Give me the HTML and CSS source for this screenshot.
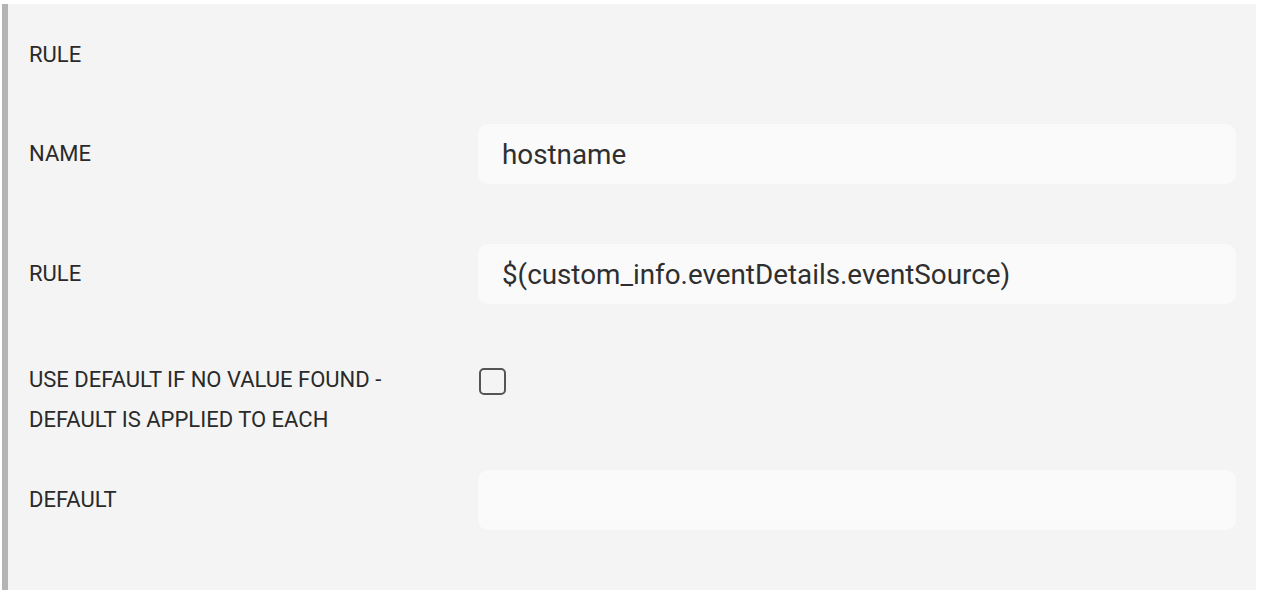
FILE: index.html
```html
<!DOCTYPE html>
<html lang="en">
<head>
    <meta charset="UTF-8">
    <title>Rule</title>
    <link rel="stylesheet" href="styles.css">
</head>
<body>

<div class="rule-panel">
    <div class="panel-title">Rule</div>

    <div class="field-row row-name">
        <label class="field-label" for="rule-name">Name</label>
        <input type="text" id="rule-name" class="field-input" value="hostname">
    </div>

    <div class="field-row row-rule">
        <label class="field-label" for="rule-expr">Rule</label>
        <input type="text" id="rule-expr" class="field-input" value="$(custom_info.eventDetails.eventSource)">
    </div>

    <div class="field-row row-check">
        <label class="field-label multi" for="use-default">Use default if no value found - default is applied to each</label>
        <span class="check-box" id="use-default"></span>
    </div>

    <div class="field-row row-default">
        <label class="field-label" for="rule-default">Default</label>
        <input type="text" id="rule-default" class="field-input" value="">
    </div>
</div>

</body>
</html>
```

FILE: styles.css
```css
/* Painel de regra */
body {
    margin: 0;
    background-color: #ffffff;
    font-family: Roboto, "Liberation Sans", Arial, sans-serif;
    color: #2f2f2f;
}

.rule-panel {
    margin: 4px 0 0 2px;
    width: 1254px;
    min-height: 586px;
    box-sizing: border-box;
    background-color: #f4f4f4;
    border-left: 6px solid #b4b4b4;
    padding: 31px 20px 0 21px;
}

.panel-title,
.field-label {
    font-size: 22px;
    font-weight: 400;
    text-transform: uppercase;
    line-height: 40px;
    color: #2a2a2a;
}

.field-row {
    display: grid;
    grid-template-columns: 449px 758px;
    align-items: center;
}

.row-name {
    margin-top: 49px;
}

.row-rule {
    margin-top: 60px;
}

.row-check {
    margin-top: 56px;
    align-items: start;
}

.row-default {
    margin-top: 30px;
}

.field-label.multi {
    width: 410px;
}

.field-input {
    height: 60px;
    box-sizing: border-box;
    border: none;
    border-radius: 10px;
    background-color: #fafafa;
    padding: 0 24px;
    font-family: Roboto, "Liberation Sans", Arial, sans-serif;
    font-size: 27.8px;
    color: #2f2f2f;
    outline: none;
}

.check-box {
    margin-top: 8px;
    margin-left: 1px;
    width: 27px;
    height: 27px;
    box-sizing: border-box;
    border: 2px solid #555555;
    border-radius: 5px;
}
```
